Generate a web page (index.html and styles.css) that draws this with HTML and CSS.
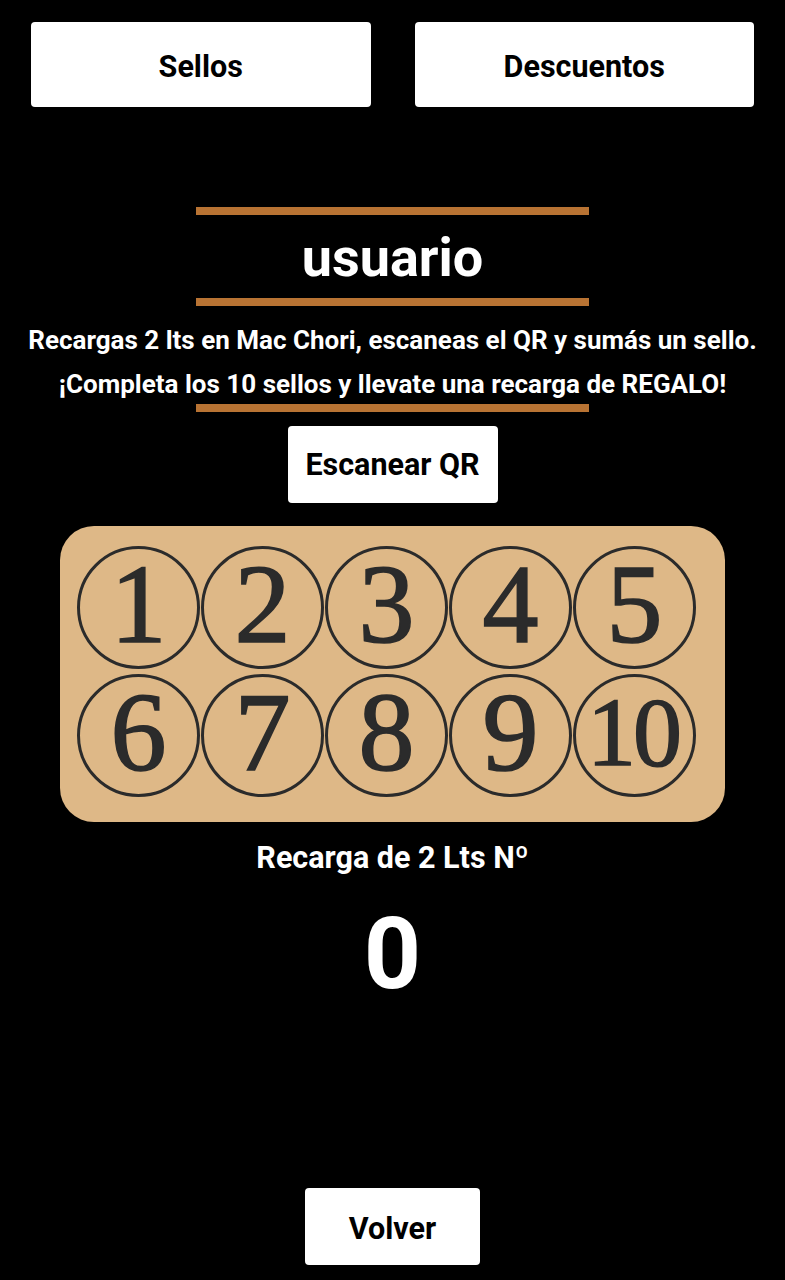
FILE: index.html
```html
<!DOCTYPE html>
<html lang="es">
<head>
<meta charset="utf-8">
<title>Sellos</title>
<link rel="stylesheet" href="styles.css">
</head>
<body>
<div class="page">
  <nav class="tabs">
    <button class="btn tab">Sellos</button>
    <button class="btn tab">Descuentos</button>
  </nav>

  <section class="header">
    <div class="rule"></div>
    <h1 class="user">usuario</h1>
    <div class="rule"></div>
    <p class="info">Recargas 2 lts en Mac Chori, escaneas el QR y sumás un sello.<br>¡Completa los 10 sellos y llevate una recarga de REGALO!</p>
    <div class="rule rule-low"></div>
  </section>

  <button class="btn scan">Escanear QR</button>

  <div class="card">
    <div class="stamps">
      <span class="stamp">1</span>
      <span class="stamp">2</span>
      <span class="stamp">3</span>
      <span class="stamp">4</span>
      <span class="stamp">5</span>
      <span class="stamp">6</span>
      <span class="stamp">7</span>
      <span class="stamp">8</span>
      <span class="stamp">9</span>
      <span class="stamp stamp-ten">10</span>
    </div>
  </div>

  <p class="count-label">Recarga de 2 Lts Nº</p>
  <p class="count">0</p>

  <button class="btn back">Volver</button>
</div>
</body>
</html>
```

FILE: styles.css
```css
* { box-sizing: border-box; }

html, body {
  margin: 0;
  padding: 0;
  background: #000;
}

body {
  font-family: Roboto, "Liberation Sans", sans-serif;
  color: #fff;
}

.page {
  display: flex;
  flex-direction: column;
  align-items: center;
  width: 785px;
  height: 1280px;
}

.btn {
  background: #fff;
  color: #000;
  border: none;
  border-radius: 4px;
  font-family: Roboto, "Liberation Sans", sans-serif;
  font-weight: 700;
  font-size: 30.5px;
  padding: 0;
  display: flex;
  align-items: center;
  justify-content: center;
}

.tabs {
  display: flex;
  gap: 44px;
  width: 100%;
  padding: 22px 31px 0;
}

.tab {
  flex: 1;
  height: 85px;
  padding-top: 3px;
}

.header {
  display: flex;
  flex-direction: column;
  align-items: center;
  margin-top: 100px;
  width: 100%;
}

.rule {
  width: 393px;
  height: 8px;
  background: #b87333;
}

.user {
  margin: 0;
  height: 83px;
  line-height: 86px;
  font-size: 54px;
  font-weight: 700;
}

.info {
  margin: 12px 0 0;
  font-size: 26px;
  font-weight: 700;
  line-height: 44px;
  text-align: center;
  white-space: nowrap;
}

.rule-low {
  margin-top: -2px;
}

.scan {
  margin-top: 14px;
  width: 210px;
  height: 77px;
}

.card {
  margin-top: 23px;
  width: 665px;
  height: 296px;
  background: #deb887;
  border-radius: 34px;
  padding: 20px 0 0 17px;
}

.stamps {
  display: grid;
  grid-template-columns: repeat(5, 124px);
  grid-auto-rows: 123px;
  row-gap: 5px;
}

.stamp {
  width: 123px;
  height: 123px;
  border: 3.5px solid #2b2b2b;
  border-radius: 50%;
  display: flex;
  align-items: center;
  justify-content: center;
  font-family: "Liberation Serif", "Times New Roman", serif;
  font-size: 112px;
  line-height: 1;
  color: #2b2b2b;
  -webkit-text-stroke: 1.6px #2b2b2b;
  padding-bottom: 8px;
}

.stamp-ten {
  font-size: 98px;
  letter-spacing: -3px;
  padding-right: 3px;
}

.count-label {
  margin: 20px 0 0;
  font-size: 30.5px;
  font-weight: 700;
  line-height: 32px;
}

.count {
  margin: 28px 0 0;
  font-size: 100px;
  font-weight: 700;
  line-height: 104px;
}

.back {
  margin-top: 182px;
  width: 175px;
  height: 77px;
  padding-top: 3px;
}
```
